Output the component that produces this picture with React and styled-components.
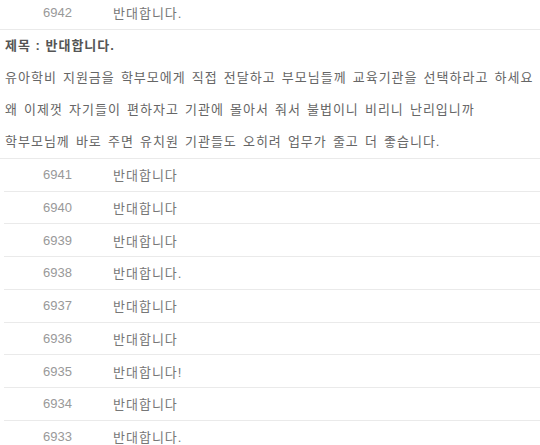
import React from 'react';
import styled, { createGlobalStyle } from 'styled-components';

const GlobalStyle = createGlobalStyle`
  html, body {
    margin: 0;
    padding: 0;
    background: #fff;
  }
  body {
    font-family: "Liberation Sans", "Noto Sans CJK KR", sans-serif;
    font-size: 13px;
    color: #666;
    overflow: hidden;
  }
`;

const Board = styled.div`
  width: 540px;
  margin-top: -3px;
`;

const Row = styled.div`
  display: flex;
  align-items: center;
  box-sizing: border-box;
  height: 32.75px;
  margin-left: ${(p) => (p.$flush ? '0' : '4px')};
  border-bottom: 1px solid #eaeaea;
`;

const Num = styled.span`
  width: 70px;
  padding-left: ${(p) => (p.$flush ? '43px' : '39px')};
  color: #999;
`;

const Subject = styled.span`
  color: #777;
  letter-spacing: 1px;
`;

const Detail = styled.div`
  padding-left: 5px;
  line-height: 32px;
  letter-spacing: 1px;
  border-bottom: 1px solid #eaeaea;
`;

const DetailTitle = styled.div`
  font-weight: bold;
  color: #555;
`;

const Body = styled.p`
  margin: 0;
  word-spacing: 1.5px;
  color: #666;
  white-space: nowrap;
`;

const rows = [
  [6941, '반대합니다'],
  [6940, '반대합니다'],
  [6939, '반대합니다'],
  [6938, '반대합니다.'],
  [6937, '반대합니다'],
  [6936, '반대합니다'],
  [6935, '반대합니다!'],
  [6934, '반대합니다'],
  [6933, '반대합니다.'],
];

export default function App() {
  return (
    <Board>
      <GlobalStyle />
      <Row $flush>
        <Num $flush>6942</Num>
        <Subject>반대합니다.</Subject>
      </Row>
      <Detail>
        <DetailTitle>제목 : 반대합니다.</DetailTitle>
        <Body>
          유아학비 지원금을 학부모에게 직접 전달하고 부모님들께 교육기관을 선택하라고 하세요
          <br />
          왜 이제껏 자기들이 편하자고 기관에 몰아서 줘서 불법이니 비리니 난리입니까
          <br />
          학부모님께 바로 주면 유치원 기관들도 오히려 업무가 줄고 더 좋습니다.
        </Body>
      </Detail>
      {rows.map(([n, t]) => (
        <Row key={n}>
          <Num>{n}</Num>
          <Subject>{t}</Subject>
        </Row>
      ))}
    </Board>
  );
}
